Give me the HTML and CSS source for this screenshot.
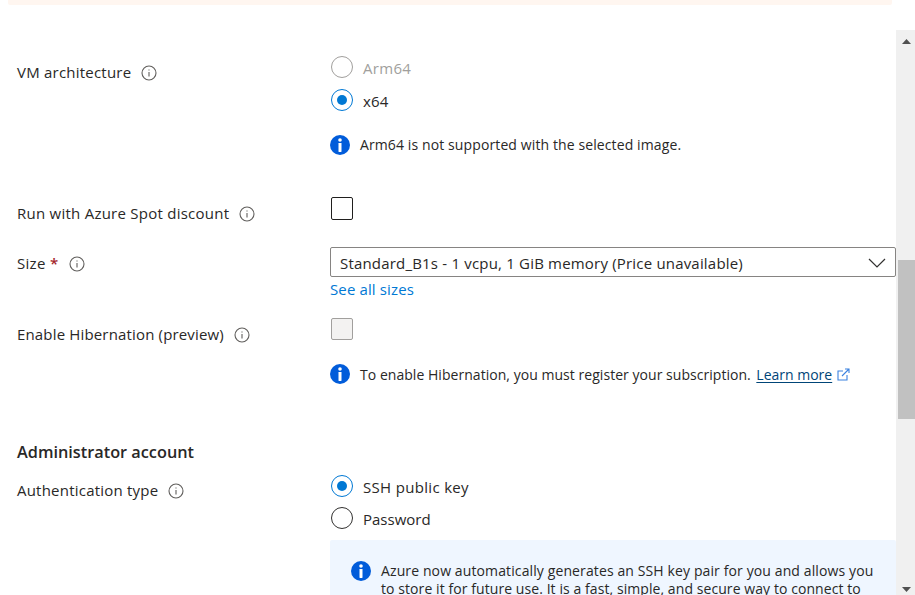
FILE: index.html
```html
<!DOCTYPE html>
<html lang="en"><head><meta charset="utf-8"><title>Create a virtual machine</title><link rel="stylesheet" href="styles.css"></head>
<body>
<svg class="defs" aria-hidden="true">
<symbol id="hint" viewBox="0 0 16 16"><circle cx="8" cy="8" r="7" fill="none" stroke="#605e5c" stroke-width="1.1"/><path d="M8 7v4.500M8 4.400v1.200" stroke="#605e5c" stroke-width="1.1"/></symbol>
<symbol id="info" viewBox="0 0 20 20"><circle cx="10" cy="10" r="10" fill="#015cda"/><circle cx="10" cy="5" r="1.8" fill="#fff"/><rect x="8.5" y="8" width="3" height="9" rx=".4" fill="#fff"/></symbol>
</svg>
<div class="banner"></div>
<div class="viewport">
<main class="form">
<div class="row arch">
 <div class="label"><span class="t l1">VM architecture</span><svg class="hint"><use href="#hint"/></svg></div>
 <div class="field">
  <div class="radio off"><i></i><span class="t r1">Arm64</span></div>
  <div class="radio on second"><i></i><span class="t r2">x64</span></div>
  <div class="note"><svg class="info"><use href="#info"/></svg><span class="t n1">Arm64 is not supported with the selected image.</span></div>
 </div>
</div>
<div class="row spot">
 <div class="label"><span class="t l2">Run with Azure Spot discount</span><svg class="hint"><use href="#hint"/></svg></div>
 <div class="field"><div class="check tall"></div></div>
</div>
<div class="row size">
 <div class="label"><span class="t l3">Size <b class="req">*</b></span><svg class="hint"><use href="#hint"/></svg></div>
 <div class="field">
  <div class="select"><span class="t s1">Standard_B1s - 1 vcpu, 1 GiB memory (Price unavailable)</span><svg class="chev" viewBox="0 0 18 10"><path d="M1 1l8 8 8-8" fill="none" stroke="#323130" stroke-width="1.2"/></svg></div>
  <a class="sizes"><span class="t a1">See all sizes</span></a>
 </div>
</div>
<div class="row hib">
 <div class="label"><span class="t l4">Enable Hibernation (preview)</span><svg class="hint"><use href="#hint"/></svg></div>
 <div class="field"><div class="check off"></div>
  <div class="note"><svg class="info"><use href="#info"/></svg><span class="t n2">To enable Hibernation, you must register your subscription.</span><a class="learn"><span class="t a2">Learn more</span></a><svg class="ext" viewBox="0 0 13 13"><path d="M6 3H1v9h9V7M5 8l7-7M8 1h4v4" fill="none" stroke="#3b82e0" stroke-width="1.1"/></svg></div>
 </div>
</div>
<h2 class="heading"><span class="t h1">Administrator account</span></h2>
<div class="row auth">
 <div class="label"><span class="t l5">Authentication type</span><svg class="hint"><use href="#hint"/></svg></div>
 <div class="field">
  <div class="radio on"><i></i><span class="t r3">SSH public key</span></div>
  <div class="radio third"><i></i><span class="t r4">Password</span></div>
  <div class="box"><svg class="info"><use href="#info"/></svg><p><span class="t p1">Azure now automatically generates an SSH key pair for you and allows you</span><br><span class="t p2">to store it for future use. It is a fast, simple, and secure way to connect to</span></p></div>
 </div>
</div>
</main>
<div class="bar"><svg class="up" viewBox="0 0 9 5"><path d="M4.500 0L9 5H0z" fill="#505050"/></svg><div class="thumb"></div><svg class="down" viewBox="0 0 9 5"><path d="M0 0h9L4.500 5z" fill="#505050"/></svg></div>
</div>
</body></html>
```
FILE: styles.css
```css
* { box-sizing: border-box; }
body { margin: 0; width: 915px; height: 595px; overflow: hidden; background: #fff; color: #292827; font: 15px/20px "Open Sans", "Noto Sans", sans-serif; }
.defs { display: none; }
svg { flex: none; display: block; }
.t { white-space: nowrap; }
.banner { width: 884px; height: 5px; margin-left: 8px; background: #fff6f0; border-radius: 0 0 2px 2px; }
.viewport { display: flex; height: 565px; margin-top: 25px; }
.form { width: 896px; padding: 26px 0 0 17px; overflow: hidden; }
.row { display: grid; grid-template-columns: 313px 566px; align-items: start; }
.arch { height: 141px; }
.spot { height: 50px; }
.size { height: 71px; }
.hib { height: 123px; }
.label { display: flex; align-items: center; height: 20px; margin-top: 6px; }
.auth .label { margin-top: 5px; }
.hint { width: 16px; height: 16px; margin-left: 10px; margin-top: 1px; }
.l1, .l5 { letter-spacing: .22px; }
.l2 { letter-spacing: .25px; }
.l3 { letter-spacing: .3px; }
.size .hint { margin-left: 11px; }
.l4 { letter-spacing: .16px; }
.r1, .r3 { letter-spacing: .32px; }
.r2 { letter-spacing: .15px; }
.s1 { letter-spacing: .19px; }
.a1 { letter-spacing: .13px; }
.n1 { letter-spacing: .11px; }
.n2 { letter-spacing: .04px; padding-top: 1px; }
.a2 { line-height: 21px; }
.p1 { letter-spacing: .115px; }
.p2 { letter-spacing: .075px; }
.req { color: #a4262c; font-weight: 600; }
.radio { display: flex; height: 22px; margin-left: 1px; align-items: center; }
.radio i { width: 22px; height: 22px; border: 1px solid #323130; border-radius: 50%; margin-right: 10px; display: grid; place-items: center; }
.radio .t { padding-top: 1px; }
.radio.off { color: #a19f9d; }
.radio.off i { border-color: #a19f9d; }
.radio.on i { border-color: #0078d4; }
.radio.on i::after { content: ""; width: 10px; height: 10px; border-radius: 50%; background: #0078d4; }
.second { margin-top: 11px; }
.third { margin-top: 10px; }
.note { display: flex; align-items: center; height: 20px; margin-top: 24px; font-size: 14px; }
.info { width: 20px; height: 20px; margin-right: 10px; }
.check { width: 22px; height: 22px; margin-left: 1px; border: 1px solid #201f1e; border-radius: 2px; }
.check.tall { height: 23px; }
.check.off { border-color: #a19f9d; background: #f3f2f1; }
.select { display: flex; align-items: center; justify-content: space-between; height: 30px; padding: 2px 9px 0; border: 1px solid #868482; border-radius: 2px; }
.chev { width: 18px; height: 10px; }
.sizes { display: block; margin-top: 2px; color: #0078d4; }
.learn { margin: 1px 0 0 5.5px; color: #004578; text-decoration: underline; text-underline-offset: 2px; }
.ext { width: 13px; height: 13px; margin-left: 5px; }
.heading { margin: 0; height: 34px; font-size: 16.3px; line-height: 22px; font-weight: 600; }
.box { display: flex; height: 120px; margin-top: 11px; padding: 21px; background: #eff6ff; border-radius: 2px 2px 0 0; }
.box p { margin: 1px 0 0; font-size: 14px; line-height: 18px; }
.bar { width: 19px; background: #f0f0f0; display: flex; flex-direction: column; align-items: center; padding-left: 1px; }
.up, .down { width: 9px; height: 5px; margin-top: 9px; }
.thumb { width: 17px; height: 159px; margin-top: 216px; align-self: flex-end; background: #c1c1c1; }
.down { margin-top: 168px; }
```
